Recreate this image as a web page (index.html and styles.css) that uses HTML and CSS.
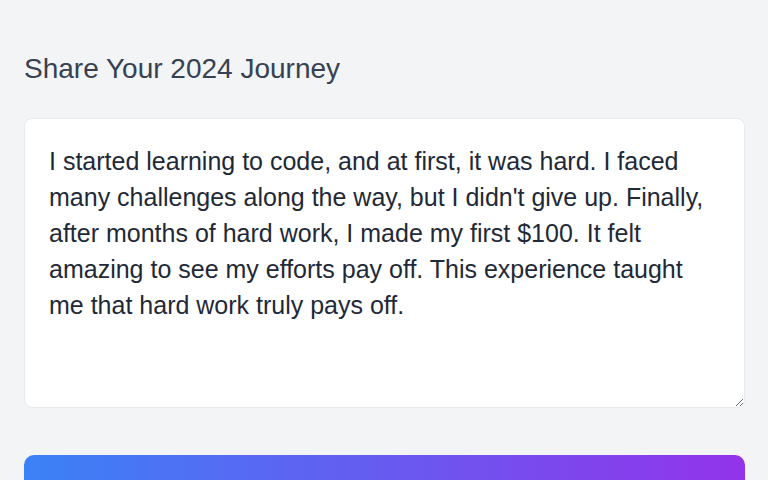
FILE: index.html
```html
<!DOCTYPE html>
<html lang="en">
<head>
<meta charset="utf-8">
<title>Share Your 2024 Journey</title>
<link rel="stylesheet" href="styles.css">
</head>
<body>
<main class="page">
  <h2 class="title">Share Your 2024 Journey</h2>
  <textarea class="story">I started learning to code, and at first, it was hard. I faced many challenges along the way, but I didn't give up. Finally, after months of hard work, I made my first $100. It felt amazing to see my efforts pay off. This experience taught me that hard work truly pays off.</textarea>
  <button class="submit" type="button">Generate</button>
</main>
</body>
</html>
```

FILE: styles.css
```css
html, body {
  margin: 0;
  padding: 0;
  background: #f3f4f6;
  font-family: "Liberation Sans", Arial, sans-serif;
  overflow: hidden;
}
.page {
  display: flex;
  flex-direction: column;
  padding: 53px 23px 0 24px;
}
.title {
  margin: 0 0 33px 0;
  font-size: 28px;
  line-height: 32px;
  font-weight: 400;
  color: #374151;
}
.story {
  display: block;
  box-sizing: border-box;
  width: 100%;
  height: 290px;
  margin: 0 0 47px 0;
  padding: 24px;
  border: 1px solid #e8eaee;
  border-radius: 8px;
  background: #fff;
  font-family: "Liberation Sans", Arial, sans-serif;
  font-size: 25px;
  line-height: 36px;
  color: #1f2937;
  resize: vertical;
  outline: none;
}
.submit {
  padding: 40px 0 24px 0;
  border: none;
  border-radius: 10px;
  background: linear-gradient(90deg, #3b82f6 0%, #9333ea 100%);
  color: #fff;
  font-family: "Liberation Sans", Arial, sans-serif;
  font-size: 20px;
  line-height: 24px;
  font-weight: 600;
}
```
